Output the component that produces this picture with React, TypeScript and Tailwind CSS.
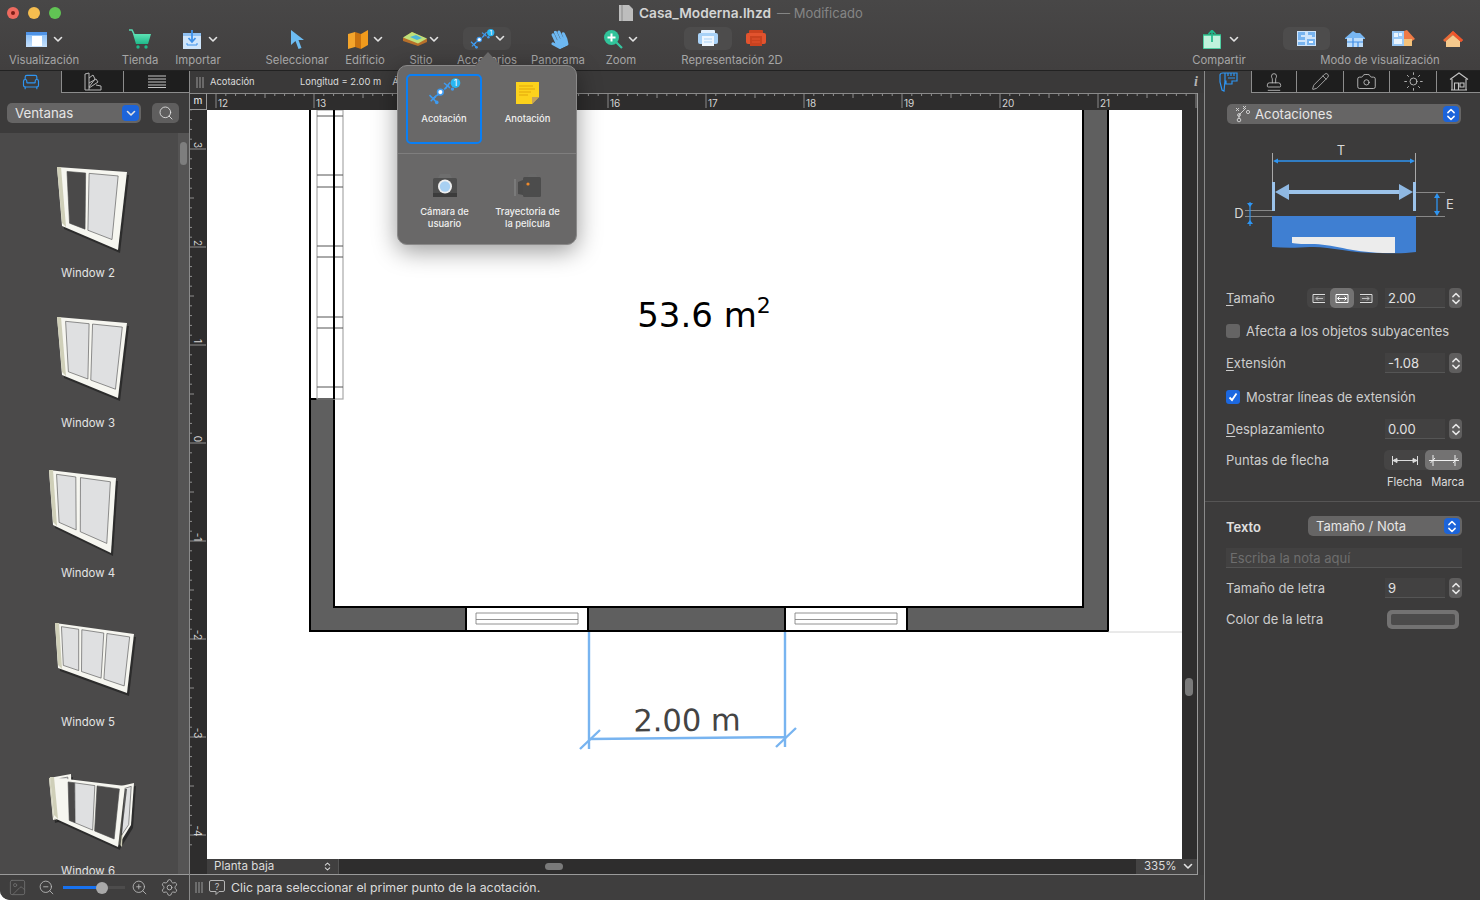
import React from "react";
import { Armchair, Stamp, Pencil, Camera, Sun, Search, ZoomIn, ZoomOut, Settings, Image as ImageIcon } from "lucide-react";
import { FaHandPaper } from "react-icons/fa";

type Pt = [number, number];

function Chev({ className = "" }: { className?: string }) {
  return (
    <svg width="10" height="7" viewBox="0 0 10 7" className={className}>
      <path d="M1.5 1.5 5 5l3.5-3.5" fill="none" stroke="#e2e2e2" strokeWidth="1.6" strokeLinecap="round" strokeLinejoin="round" />
    </svg>
  );
}

function UpDown({ color = "#fff", w = 10, h = 15 }: { color?: string; w?: number; h?: number }) {
  return (
    <svg width={w} height={h} viewBox="0 0 8 12">
      <path d="M1.5 4.5 4 2l2.5 2.5M1.5 7.5 4 10l2.5-2.5" fill="none" stroke={color} strokeWidth="1.2" strokeLinecap="round" strokeLinejoin="round" />
    </svg>
  );
}

function Grip() {
  return (
    <svg width="8" height="11" viewBox="0 0 8 11" className="shrink-0">
      <path d="M1 0v11M4 0v11M7 0v11" stroke="#9a9a9a" strokeWidth="1" />
    </svg>
  );
}

function ViewIcon() {
  return (
    <svg width="21" height="15" viewBox="0 0 21 15">
      <defs>
        <linearGradient id="vw" x1="0" y1="0" x2="0" y2="1">
          <stop offset="0" stopColor="#7fb8f5" />
          <stop offset="1" stopColor="#c6e0fb" />
        </linearGradient>
      </defs>
      <rect width="21" height="15" fill="url(#vw)" />
      <rect x="0" y="0" width="21" height="3" fill="#4f93e6" />
      <rect x="6" y="4" width="10" height="10" fill="#fff" />
    </svg>
  );
}

function CartIcon() {
  return (
    <svg width="24" height="20" viewBox="0 0 24 20">
      <defs>
        <linearGradient id="ct" x1="0" y1="0" x2="0" y2="1">
          <stop offset="0" stopColor="#5de3b5" />
          <stop offset="1" stopColor="#1fb98a" />
        </linearGradient>
      </defs>
      <path d="M1 1h3l2 4" fill="none" stroke="#58d8b0" strokeWidth="1.6" />
      <path d="M5 5h18l-3 10H8z" fill="url(#ct)" />
      <circle cx="10" cy="18" r="1.7" fill="#1fb98a" />
      <circle cx="18" cy="18" r="1.7" fill="#1fb98a" />
    </svg>
  );
}

function ImportIcon() {
  return (
    <svg width="18" height="19" viewBox="0 0 18 19">
      <rect x="0" y="3" width="18" height="16" fill="#cfe5fb" />
      <rect x="0" y="3" width="18" height="3" fill="#8fc0f2" />
      <path d="M9 0v11M5.500 8 9 12l3.500-4" fill="none" stroke="#3f92ea" strokeWidth="1.8" />
      <path d="M4 13v2h10v-2" fill="none" stroke="#3f92ea" strokeWidth="1" />
    </svg>
  );
}

function CursorIcon() {
  return (
    <svg width="15" height="19" viewBox="0 0 15 19">
      <path d="M1 0 14 10H8.500l3 8-3 1-3-8L1 15z" fill="#6dbcf2" />
    </svg>
  );
}

function BuildIcon() {
  return (
    <svg width="20" height="19" viewBox="0 0 20 19">
      <path d="M0 4 7 2v15l-7 2z" fill="#f5a52b" />
      <path d="M7 2l6 2v15l-6-2z" fill="#c9720f" />
      <path d="M13 4l7-4v15l-7 4z" fill="#f09a1c" />
    </svg>
  );
}

function SiteIcon() {
  return (
    <svg width="24" height="14" viewBox="0 0 24 14">
      <path d="M0 6 9 0l15 7v3l-9 4L0 9z" fill="#b8702a" />
      <path d="M0 5.500 9 0l15 6.500-9 5z" fill="#bfe07a" />
      <path d="M7 5l6-2 6 3-5 2z" fill="#4db6d8" />
    </svg>
  );
}

function DimIcon({ w = 26, h = 22 }: { w?: number; h?: number }) {
  return (
    <svg width={w} height={h} viewBox="0 0 28 24">
      <path d="M2 15l6 6M3 20l5-5" stroke="#3f9bf0" strokeWidth="1.2" />
      <path d="M5 18 18 7" stroke="#3f9bf0" strokeWidth="1.4" strokeDasharray="3 1" />
      <circle cx="8" cy="21" r="1.5" fill="#3f9bf0" />
      <circle cx="11" cy="12.500" r="3" fill="#3f9bf0" />
      <circle cx="11" cy="12.500" r="1.7" fill="#fff" />
      <path d="M14 5l5 4M15 9.500l4-5" stroke="#3f9bf0" strokeWidth="1.2" />
      <circle cx="21" cy="10" r="1.4" fill="#3f9bf0" />
      <circle cx="23.500" cy="5" r="4" fill="#29b5f2" />
      <text x="23.500" y="7.500" textAnchor="middle" fontSize="7" fill="#fff">1</text>
    </svg>
  );
}

function ZoomGreen() {
  return (
    <svg width="19" height="19" viewBox="0 0 19 19">
      <path d="m11 11 7 7" stroke="#36c7a0" strokeWidth="2.2" />
      <circle cx="7.500" cy="7.500" r="7.500" fill="#31c39a" />
      <path d="M7.500 3.500v8M3.500 7.500h8" stroke="#fff" strokeWidth="2" />
    </svg>
  );
}

function Render({ a, b, c }: { a: string; b: string; c: string }) {
  return (
    <svg width="20" height="17" viewBox="0 0 20 17">
      <rect x="3" y="0" width="14" height="5" rx="1" fill={b} />
      <rect x="0" y="3" width="20" height="11" rx="2" fill={a} />
      <rect x="4" y="6" width="12" height="10" fill={c} />
      <path d="M6 9h8M6 12h8" stroke={a} strokeWidth="1" />
    </svg>
  );
}

function ShareIcon() {
  return (
    <svg width="18" height="19" viewBox="0 0 18 19">
      <rect x="0" y="5" width="18" height="14" fill="#bff3dc" stroke="#2cc38f" strokeWidth="1.5" />
      <path d="M9 12V1M5.500 4 9 .5 12.500 4" fill="none" stroke="#1fb98a" strokeWidth="1.7" />
    </svg>
  );
}

function PlanMode() {
  return (
    <svg width="19" height="15" viewBox="0 0 19 15">
      <rect width="19" height="15" fill="#cfe4fa" />
      <path d="M1 1h7v3H4v2h4v3H1zM11 1h7v5h-3V4h-4zM1 11h7v3H1zM10 8h8v6h-8z" fill="#78b4ef" />
      <path d="M12 10h4v2h-4z" fill="#f0f7fe" />
    </svg>
  );
}

function HouseMode() {
  return (
    <svg width="20" height="16" viewBox="0 0 20 16">
      <path d="M0 7 8 0l3 2h4l5 5v1H0z" fill="#77b6f2" />
      <rect x="2" y="7" width="16" height="9" fill="#bcdcfa" />
      <path d="M2 11h16M8 7v9M13 11v5" stroke="#3f8ee6" strokeWidth="1.2" />
    </svg>
  );
}

function SplitMode() {
  return (
    <svg width="23" height="17" viewBox="0 0 23 17">
      <rect x="0" y="1" width="12" height="15" fill="#9ac8f5" />
      <path d="M2 3h4v4H2zM7 3h3v3H7zM2 9h8v5H2z" fill="#e9f4fe" />
      <path d="M12 1l3-1 8 9-3 2v5h-8z" fill="#ef7a45" />
      <path d="M12 9h8v7h-8z" fill="#f4c27a" />
    </svg>
  );
}

function RoofMode() {
  return (
    <svg width="20" height="16" viewBox="0 0 20 16">
      <path d="M10 0 20 9l-2 2L10 4 2 11 0 9z" fill="#ea6a37" />
      <path d="M3 10l7-6 7 6v6H3z" fill="#f5c98d" />
      <path d="M10 0 20 9l-2 2L8 2z" fill="#f0552c" />
    </svg>
  );
}

function NoteIcon() {
  return (
    <svg width="23" height="24" viewBox="0 0 23 24">
      <path d="M0 1h23v15l-7 7H0z" fill="#fcd21c" />
      <path d="M23 16h-7v7z" fill="#c4a25a" />
      <path d="M3 5h14M3 8h16M3 11h12M3 14h9" stroke="#e2a50a" strokeWidth="1.2" />
    </svg>
  );
}

function CamIcon() {
  return (
    <svg width="24" height="24" viewBox="0 0 24 24">
      <path d="M7 0h10l2 4H5z" fill="#6e6e6e" />
      <rect y="4" width="24" height="18" rx="1.500" fill="#4e4e4e" />
      <rect y="19" width="24" height="4" fill="#3c3c3c" />
      <circle cx="12" cy="12.500" r="7" fill="#f0f0f0" />
      <circle cx="12" cy="12.500" r="5.200" fill="#a8d0f2" />
    </svg>
  );
}

function MovieIcon() {
  return (
    <svg width="27" height="24" viewBox="0 0 27 24">
      <rect x="0" y="5" width="2" height="17" fill="#7a7a7a" />
      <path d="M4 8l5-2v15l-5-1z" fill="#4a4a4a" />
      <path d="M15 0h7l2 3h-11z" fill="#6a6a6a" />
      <rect x="9" y="3" width="18" height="20" rx="1.500" fill="#4c4c4c" />
      <circle cx="14" cy="10" r="1.600" fill="#f08a2a" />
    </svg>
  );
}

function FanIcon() {
  return (
    <svg width="18" height="19" viewBox="0 0 18 19" fill="none" stroke="#b5b5b5" strokeWidth="1">
      <path d="M1 18V2l4-1v17zM5 6l4-3 2 4-6 8M5 11l7-4 2 3-9 6M5 18h12v-4l-5-1" />
    </svg>
  );
}

function ListIcon() {
  return (
    <svg width="18" height="13" viewBox="0 0 18 13">
      <path d="M0 1h18M0 4h18M0 7h18M0 10h18M0 12.500h18" stroke="#c4c4c4" strokeWidth="1" />
    </svg>
  );
}

function CaliperIcon() {
  return (
    <svg width="20" height="20" viewBox="0 0 20 20" fill="none" stroke="#2e95f2" strokeWidth="1.2">
      <path d="M2 3c0-1 1-2 3-2h14v8h-5v3H8v-3H7l-1 10-2-1-2-8z" />
      <path d="M7 1v8M10 1v3M13 1v3M16 1v3M10 6h7" />
    </svg>
  );
}

function GarageIcon() {
  return (
    <svg width="20" height="19" viewBox="0 0 20 19" fill="none" stroke="#c4c4c4" strokeWidth="1.100">
      <path d="M1 7.500 10 1l9 6.500M3 7v11h14V7M2 18h16" />
      <path d="M5.500 18v-7h4v7M11 11h4v4h-4z" />
    </svg>
  );
}

function HelpBubble() {
  return (
    <svg width="16" height="15" viewBox="0 0 16 15" className="ml-[6px] shrink-0">
      <path d="M2 .5h12A1.500 1.500 0 0 1 15.500 2v8a1.500 1.500 0 0 1-1.500 1.500h-4L7 14.500v-3H2A1.500 1.500 0 0 1 .5 10V2A1.500 1.500 0 0 1 2 .5z" fill="none" stroke="#b5b5b5" strokeWidth="1" />
      <text x="8" y="9.500" textAnchor="middle" fontSize="9" fill="#c4c4c4">?</text>
    </svg>
  );
}

function Tab({ selected, className = "", children }: { selected?: boolean; className?: string; children: React.ReactNode }) {
  return (
    <div
      className={
        "flex h-[22px] items-center justify-center " +
        (selected ? "bg-[#3c3b3b] " : "border-b border-r border-b-[#8c8c8c] border-r-[#8c8c8c] bg-[#1e1e1e] ") +
        className
      }
    >
      {children}
    </div>
  );
}

function ToolLabel({ children, className = "" }: { children: React.ReactNode; className?: string }) {
  return <div className={"mt-[3px] h-[14px] whitespace-nowrap text-center text-[11.3px] leading-[14px] text-[#a6a6a6] " + className}>{children}</div>;
}

function lerp(q: Pt[], u: number, v: number): Pt {
  const [tl, tr, br, bl] = q;
  const x = (1 - v) * ((1 - u) * tl[0] + u * tr[0]) + v * ((1 - u) * bl[0] + u * br[0]);
  const y = (1 - v) * ((1 - u) * tl[1] + u * tr[1]) + v * ((1 - u) * bl[1] + u * br[1]);
  return [x, y];
}

function quadPts(q: Pt[], u0: number, u1: number, v0: number, v1: number) {
  return [lerp(q, u0, v0), lerp(q, u1, v0), lerp(q, u1, v1), lerp(q, u0, v1)].map((p) => p.join(",")).join(" ");
}

type Pane = [number, number, boolean];

function WindowQuad({ q, panes, v0 = 0.06, v1 = 0.9 }: { q: Pt[]; panes: Pane[]; v0?: number; v1?: number }) {
  const side: Pt[] = [q[0], [q[0][0] + 4, q[0][1]], [q[3][0] + 4, q[3][1] + 1], [q[3][0], q[3][1] - 3]];
  return (
    <g>
      <polygon points={q.map((p) => `${p[0] + 2},${p[1] + 3}`).join(" ")} fill="#1f1f1f" opacity="0.7" />
      <polygon points={q.map((p) => p.join(",")).join(" ")} fill="#f6f6f0" />
      <polygon points={side.map((p) => p.join(",")).join(" ")} fill="#cfcfb8" />
      {panes.map((p, i) => (
        <polygon
          key={i}
          points={quadPts(q, p[0], p[1], v0, v1)}
          fill={p[2] ? "#dfe0e1" : "#4a4949"}
          stroke="#4a4a4a"
          strokeWidth="0.6"
        />
      ))}
    </g>
  );
}

function WindowItem({ name, y0, className = "", children }: { name: string; y0: number; className?: string; children: React.ReactNode }) {
  return (
    <div className={"h-[150px] shrink-0 " + className}>
      <svg width="178" height="108" viewBox={`0 ${y0} 178 108`} className="block">
        {children}
      </svg>
      <div className="mt-[2px] h-[16px] pr-[2px] text-center text-[11.4px] leading-[16px] text-[#e4e4e4]">{name}</div>
    </div>
  );
}

function Stepper() {
  return (
    <div className="flex h-[20px] w-[13px] items-center justify-center rounded-[4px] bg-[#5f5e5e]">
      <UpDown color="#e6e6e6" />
    </div>
  );
}

function Field({ value, className = "" }: { value: string; className?: string }) {
  return (
    <div className={"flex items-center gap-[4px] " + className}>
      <div className="h-[20px] w-[60px] border-b border-b-[#555] bg-[#424141] pl-[3px] text-[13px] leading-[21px] text-[#e2e2e2]">{value}</div>
      <Stepper />
    </div>
  );
}

function Label({ first, rest }: { first?: string; rest: string }) {
  return (
    <span className="text-[13px] leading-[20px] text-[#cdcdcd]">
      {first ? <u className="underline-offset-2">{first}</u> : null}
      {rest}
    </span>
  );
}

function AlignGlyph({ kind }: { kind: number }) {
  return (
    <svg width="14" height="11" viewBox="0 0 14 11">
      {kind === 0 && (
        <g stroke="#dcdcdc" strokeWidth="1" fill="none">
          <path d="M13 1.500H1v8h12" />
          <path d="M4 5.500h7M4 5.500l2-2M4 5.500l2 2" />
          <path d="M1 3h12v5H1z" fill="#8a8a8a" stroke="none" opacity="0.35" />
        </g>
      )}
      {kind === 1 && (
        <g stroke="#fff" strokeWidth="1" fill="none">
          <path d="M1 1.500h12v8H1z" />
          <path d="M2.500 5.500h9M2.500 5.500l2-2M2.500 5.500l2 2M11.500 5.500l-2-2M11.500 5.500l-2 2" />
        </g>
      )}
      {kind === 2 && (
        <g stroke="#dcdcdc" strokeWidth="1" fill="none">
          <path d="M1 1.500h12v8H1" />
          <path d="M3 5.500h7M10 5.500l-2-2M10 5.500l-2 2" />
          <path d="M1 3h12v5H1z" fill="#8a8a8a" stroke="none" opacity="0.35" />
        </g>
      )}
    </svg>
  );
}

function Ruler() {
  const ticks: React.ReactNode[] = [];
  for (let i = -1; i < 110; i++) {
    const x = 216 + i * 9.8;
    const major = (i + 100) % 10 === 0;
    const mid = (i + 100) % 5 === 0;
    ticks.push(<line key={i} x1={x} x2={x} y1={94} y2={major ? 108 : mid ? 98 : 96} stroke={major ? "#8a8a8a" : "#8f8f8f"} strokeWidth="1" />);
  }
  const nums = [12, 13, 14, 15, 16, 17, 18, 19, 20, 21];
  return (
    <svg width="990" height="17" viewBox="207 93 990 17" className="block">
      <line x1="207" x2="1197" y1="93.5" y2="93.5" stroke="#8a8a8a" />
      {ticks}
      {nums.map((n, i) => (
        <text key={n} x={218 + i * 98} y={107} fontSize="10" fill="#d4d4d4">{n}</text>
      ))}
    </svg>
  );
}

function VRuler() {
  const ticks: React.ReactNode[] = [];
  for (let i = -5; i < 72; i++) {
    const y = 149 + i * 9.8;
    const major = (i + 100) % 10 === 0;
    ticks.push(<line key={i} x1={190} x2={major ? 206 : (i + 100) % 5 === 0 ? 194 : 192} y1={y} y2={y} stroke="#8f8f8f" strokeWidth="1" />);
  }
  const nums = [3, 2, 1, 0, -1, -2, -3, -4];
  return (
    <svg width="17" height="749" viewBox="190 110 17 749" className="block shrink-0">
      {ticks}
      {nums.map((n, i) => {
        const cy = 145 + i * 98;
        return (
          <text key={n} x="198" y={cy} fontSize="10" fill="#d4d4d4" textAnchor="middle" dominantBaseline="central" transform={`rotate(90 198 ${cy})`}>
            {n}
          </text>
        );
      })}
    </svg>
  );
}

function Plan() {
  const hLines = [116, 175, 187, 246, 257, 317, 328, 387];
  const winFrame = (x: number) => (
    <g>
      <rect x={x} y="607" width="122" height="24" fill="#fff" stroke="#000" strokeWidth="2" />
      <path d={`M${x + 10} 613v11M${x + 112} 613v11M${x + 10} 613h102M${x + 10} 619.5h102M${x + 10} 624h102`} stroke="#777" strokeWidth="0.8" fill="none" />
    </g>
  );
  return (
    <svg width="975" height="749" viewBox="207 110 975 749" className="block shrink-0 bg-white">
      <path d="M310 399h24v208h749V110h25v521H310z" fill="#5f5f5f" />
      <path d="M310 110v521h798V110M334 110v497h749V110" fill="none" stroke="#000" strokeWidth="2" />
      <path d="M310 399h24" stroke="#000" strokeWidth="2" />
      <rect x="317" y="110" width="26" height="289" fill="none" stroke="#a9a9a9" strokeWidth="1.2" />
      {hLines.map((y) => (
        <line key={y} x1="317" x2="343" y1={y} y2={y} stroke="#555" strokeWidth="1" />
      ))}
      <path d="M334 110v289" stroke="#000" strokeWidth="2" />
      {winFrame(466)}
      {winFrame(785)}
      <line x1="1108" x2="1182" y1="632" y2="632" stroke="#d4d4d4" strokeWidth="1" />
      <g stroke="#78b4f0" strokeWidth="2.4" fill="none">
        <path d="M589 632v117M785 632v115M589 739 785 737" />
        <path d="M580 749 600 730M776 747 796 728" />
      </g>
      <text x="704" y="327" textAnchor="middle" fontSize="34" fill="#000" fontFamily="'DejaVu Sans',sans-serif">
        53.6 m<tspan fontSize="22" dy="-14">2</tspan>
      </text>
      <text x="687" y="731" textAnchor="middle" fontSize="30.500" fill="#444" fontFamily="'DejaVu Sans',sans-serif" transform="rotate(-0.5 687 720)">
        2.00 m
      </text>
    </svg>
  );
}

function Diagram() {
  return (
    <svg width="275" height="130" viewBox="1205 135 275 130" className="block">
      <text x="1341" y="155" fontSize="13" fill="#d8d8d8" textAnchor="middle">T</text>
      <path d="M1272.500 153v57M1415.500 153v57" stroke="#a8a8a8" strokeWidth="1" />
      <path d="M1275 161h138" stroke="#2e95f2" strokeWidth="1.3" />
      <path d="M1273 161l5-2.500v5zM1415 161l-5-2.500v5z" fill="#2e95f2" />
      <rect x="1272" y="182" width="3" height="29" fill="#9cc3ea" />
      <rect x="1413" y="182" width="3" height="29" fill="#9cc3ea" />
      <path d="M1289 190h110v4h-110z" fill="#9cc3ea" />
      <path d="M1275 192l14-8v16zM1413 192l-14-8v16z" fill="#8fb8e2" />
      <path d="M1245 210.500h27M1245 216.500h200M1416 192.500h29" stroke="#888" strokeWidth="1" />
      <path d="M1437 196v18" stroke="#2e95f2" strokeWidth="1.3" />
      <path d="M1437 193l-3 5h6zM1437 216l-3-5h6z" fill="#2e95f2" />
      <text x="1450" y="209" fontSize="13" fill="#d8d8d8" textAnchor="middle">E</text>
      <path d="M1250 202v24" stroke="#2e95f2" strokeWidth="1.2" />
      <path d="M1250 207l-3-4h6zM1250 220l-3 4h6z" fill="#2e95f2" />
      <text x="1239" y="218" fontSize="13" fill="#d8d8d8" textAnchor="middle">D</text>
      <path d="M1272 216h144v36c-14 2-26 1-38 1-28 0-50-7-68-6-14 1-26 1-38 0z" fill="#3f7fd2" />
      <path d="M1292 237h103v16c-38 1-58-8-80-9-10 0-19 0-23-1z" fill="#ececec" />
    </svg>
  );
}

export default function App() {
  return (
    <div className="relative flex h-[900px] w-[1480px] flex-col overflow-hidden rounded-bl-[10px] bg-[#3c3b3b] font-['Inter','Liberation_Sans',sans-serif]">
      <header className="h-[71px] shrink-0 border-b border-b-[#222] bg-gradient-to-b from-[#484747] to-[#413f3f]">
        <div className="relative flex h-[25px] items-center">
          <div className="ml-[7px] flex items-center gap-[9px]">
            <div className="flex h-[12px] w-[12px] items-center justify-center rounded-full bg-[#ee6a5f]">
              <div className="h-[4px] w-[4px] rounded-full bg-[#7c1d17]" />
            </div>
            <div className="h-[12px] w-[12px] rounded-full bg-[#f5bd4f]" />
            <div className="h-[12px] w-[12px] rounded-full bg-[#61c454]" />
          </div>
          <div className="ml-[558px] flex items-center">
            <svg width="14" height="16" viewBox="0 0 14 16" className="mr-[6px]">
              <path d="M0 0h10l4 4v12H0z" fill="#bdbdbd" />
              <path d="M3 0v16" stroke="#8a8a8a" strokeWidth="1" />
            </svg>
            <span className="text-[13.7px] font-semibold leading-[18px] text-[#d4d4d4]">Casa_Moderna.lhzd</span>
            <span className="ml-[6px] text-[13px] leading-[18px] text-[#858585]">— Modificado</span>
          </div>
        </div>
        <div className="mt-[3px] flex h-[42px]">
          <div className="ml-[4px] w-[80px]">
            <div className="flex h-[22px] items-center justify-center gap-[6px]"><ViewIcon /><Chev /></div>
            <ToolLabel>Visualización</ToolLabel>
          </div>
          <div className="ml-[36px] w-[40px]">
            <div className="flex h-[22px] items-center justify-center"><CartIcon /></div>
            <ToolLabel>Tienda</ToolLabel>
          </div>
          <div className="ml-[8px] w-[60px]">
            <div className="flex h-[22px] items-center justify-center gap-[7px] pl-[4px]"><ImportIcon /><Chev /></div>
            <ToolLabel>Importar</ToolLabel>
          </div>
          <div className="ml-[34px] w-[70px]">
            <div className="flex h-[22px] items-center justify-center"><CursorIcon /></div>
            <ToolLabel>Seleccionar</ToolLabel>
          </div>
          <div className="ml-[8px] w-[50px]">
            <div className="flex h-[22px] items-center justify-center gap-[5px]"><BuildIcon /><Chev /></div>
            <ToolLabel>Edificio</ToolLabel>
          </div>
          <div className="ml-[6px] w-[50px]">
            <div className="flex h-[22px] items-center justify-center gap-[2px]"><SiteIcon /><Chev /></div>
            <ToolLabel>Sitio</ToolLabel>
          </div>
          <div className="ml-[11px] w-[60px]">
            <div className="mx-auto -mt-px flex h-[23px] w-[48px] items-center justify-center rounded-[6px] bg-[#4b4a4a]"><DimIcon /><Chev /></div>
            <ToolLabel>Accesorios</ToolLabel>
          </div>
          <div className="ml-[11px] w-[60px]">
            <div className="flex h-[22px] items-center justify-center"><FaHandPaper size={19} color="#6db8f2" className="-rotate-[25deg]" /></div>
            <ToolLabel>Panorama</ToolLabel>
          </div>
          <div className="ml-[8px] w-[50px]">
            <div className="flex h-[22px] items-center justify-center gap-[5px]"><ZoomGreen /><Chev /></div>
            <ToolLabel>Zoom</ToolLabel>
          </div>
          <div className="ml-[31px] w-[110px]">
            <div className="-mt-px flex h-[23px] items-center pl-[7px]">
              <div className="flex h-[23px] w-[48px] items-center justify-center rounded-[6px] bg-[#4d4c4c]"><Render a="#a9d2f7" b="#e3f0fd" c="#eef6fe" /></div>
              <div className="ml-[14px]"><Render a="#e2532e" b="#c9421f" c="#c9421f" /></div>
            </div>
            <ToolLabel>Representación 2D</ToolLabel>
          </div>
          <div className="ml-[402px] w-[60px]">
            <div className="flex h-[22px] items-center justify-center gap-[8px] pl-[4px]"><ShareIcon /><Chev /></div>
            <ToolLabel>Compartir</ToolLabel>
          </div>
          <div className="ml-[21px] w-[210px]">
            <div className="-mt-px flex h-[23px] items-center pl-[13px]">
              <div className="flex h-[23px] w-[47px] items-center justify-center rounded-[6px] bg-[#4d4c4c]"><PlanMode /></div>
              <div className="ml-[15px]"><HouseMode /></div>
              <div className="ml-[27px]"><SplitMode /></div>
              <div className="ml-[28px]"><RoofMode /></div>
            </div>
            <ToolLabel className="pl-[10px]">Modo de visualización</ToolLabel>
          </div>
        </div>
      </header>

      <div className="flex min-h-0 flex-1">
        <aside className="flex w-[190px] shrink-0 flex-col border-r border-r-[#8a8a8a]">
          <div className="flex h-[23px] shrink-0">
            <Tab selected className="w-[61px]"><Armchair size={20} color="#2e95f2" strokeWidth={1.4} /></Tab>
            <Tab className="w-[63px] border-l border-l-[#8c8c8c]"><FanIcon /></Tab>
            <Tab className="w-[65px] !border-r-0"><ListIcon /></Tab>
          </div>
          <div className="flex h-[39px] shrink-0 items-start pl-[7px] pt-[9px]">
            <div className="flex h-[20px] w-[134px] items-center justify-between rounded-[5px] bg-[#666565] pl-[8px] pr-[2px]">
              <span className="text-[13.3px] leading-[20px] text-[#e6e6e6]">Ventanas</span>
              <div className="flex h-[16px] w-[17px] items-center justify-center rounded-[4px] bg-[#1c64da]"><Chev /></div>
            </div>
            <div className="ml-[11px] flex h-[20px] w-[27px] items-center justify-center rounded-[5px] bg-[#5f5e5e]">
              <Search size={16} color="#e4e4e4" strokeWidth={1.3} />
            </div>
          </div>
          <div className="flex min-h-0 flex-1">
            <div className="flex w-[178px] flex-col overflow-hidden bg-[#4b4a4a] pt-[22px]">
              <WindowItem name="Window 2" y0={155}>
                <WindowQuad q={[[57, 167], [127, 172], [118, 250], [62, 226]]} panes={[[0.14, 0.41, false], [0.46, 0.88, true]]} />
              </WindowItem>
              <WindowItem name="Window 3" y0={305}>
                <WindowQuad q={[[57, 317], [127, 323], [118, 398], [62, 375]]} panes={[[0.12, 0.46, true], [0.51, 0.94, true]]} />
              </WindowItem>
              <WindowItem name="Window 4" y0={455}>
                <WindowQuad q={[[49, 470], [116, 478], [111, 553], [53, 525]]} panes={[[0.11, 0.4, true], [0.47, 0.92, true]]} />
              </WindowItem>
              <WindowItem name="Window 5" y0={604} className="-mt-px">
                <WindowQuad q={[[55, 623], [134, 634], [127, 693], [58, 668]]} panes={[[0.08, 0.3, true], [0.34, 0.62, true], [0.66, 0.95, true]]} />
              </WindowItem>
              <WindowItem name="Window 6" y0={753} className="-mt-px">
                <WindowQuad q={[[121, 786], [134, 783], [131, 825], [118, 846]]} panes={[[0.25, 0.8, true]]} />
                <WindowQuad q={[[49, 778], [71, 774], [72, 815], [53, 820]]} panes={[[0.2, 0.85, true]]} />
                <WindowQuad q={[[50, 777], [125, 786], [118, 847], [54, 818]]} panes={[[0.24, 0.33, false], [0.33, 0.6, true], [0.63, 0.93, false]]} />
              </WindowItem>
            </div>
            <div className="w-[11px] bg-[#555454] pl-[2px] pt-[9px]">
              <div className="h-[23px] w-[7px] rounded-[4px] bg-[#7e7e7e]" />
            </div>
          </div>
          <div className="flex h-[26px] shrink-0 items-center border-t border-t-[#9a9a9a] bg-[#3f3e3e] pl-[8px]">
            <ImageIcon size={19} color="#6f6f6f" strokeWidth={1.1} />
            <ZoomOut size={17} color="#bdbdbd" strokeWidth={1.2} className="ml-[11px]" />
            <div className="relative ml-[8px] flex h-[12px] w-[62px] items-center">
              <div className="h-[3px] w-[39px] bg-[#1872f0]" />
              <div className="h-[3px] w-[23px] bg-[#4d4c4c]" />
              <div className="absolute left-[33px] h-[12px] w-[12px] rounded-full bg-[#a9a9a9]" />
            </div>
            <ZoomIn size={17} color="#bdbdbd" strokeWidth={1.2} className="ml-[6px]" />
            <Settings size={19} color="#bdbdbd" strokeWidth={1.1} className="ml-[12px]" />
          </div>
        </aside>

        <main className="flex w-[1015px] shrink-0 flex-col border-r border-r-[#8a8a8a]">
          <div className="flex h-[22px] shrink-0 items-center bg-[#3a3939] pl-[6px] pr-[6px] text-[9.4px] text-[#dcdcdc]">
            <Grip />
            <span className="ml-[6px] w-[90px]">Acotación</span>
            <span>Longitud = 2.00 m</span>
            <span className="ml-[11px]">Ángulo</span>
            <span className="ml-auto font-['Liberation_Serif',serif] text-[14px] font-bold italic leading-[22px] text-[#b5b5b5]">i</span>
          </div>
          <div className="flex min-h-0 flex-1 flex-col pr-[6px]">
            <div className="flex min-h-0 flex-1 flex-col border-b border-r border-b-[#9a9a9a] border-r-[#9a9a9a]">
              <div className="flex h-[17px] shrink-0 bg-[#2e2d2d]">
                <div className="h-[17px] w-[17px] border-b border-r border-t border-b-[#9a9a9a] border-r-[#9a9a9a] border-t-[#8a8a8a] text-center text-[10px] font-medium leading-[13px] text-[#dcdcdc]">m</div>
                <Ruler />
              </div>
              <div className="flex h-[749px] shrink-0 bg-[#2e2d2d]">
                <VRuler />
                <Plan />
                <div className="w-[15px] pl-[3px] pt-[568px]">
                  <div className="h-[18px] w-[8px] rounded-[4px] bg-[#7a7a7a]" />
                </div>
              </div>
              <div className="flex h-[15px] shrink-0 bg-[#2e2d2d] pl-[17px]">
                <div className="flex h-[15px] w-[132px] items-center justify-between border-r border-r-[#555] bg-[#403f3f] pl-[7px] pr-[7px]">
                  <span className="text-[11.6px] leading-[15px] text-[#dcdcdc]">Planta baja</span>
                  <UpDown color="#d8d8d8" w={7} h={11} />
                </div>
                <div className="ml-[206px] mt-[4px] h-[7px] w-[18px] rounded-[4px] bg-[#7a7a7a]" />
                <div className="ml-auto flex h-[15px] w-[61px] items-center justify-between bg-[#444343] pl-[8px] pr-[4px]">
                  <span className="text-[11.5px] leading-[15px] text-[#dcdcdc]">335%</span>
                  <Chev />
                </div>
              </div>
            </div>
          </div>
          <div className="flex h-[25px] shrink-0 items-center bg-[#3f3e3e] pl-[5px]">
            <Grip />
            <HelpBubble />
            <span className="ml-[6px] text-[12.3px] leading-[18px] text-[#dcdcdc]">Clic para seleccionar el primer punto de la acotación.</span>
          </div>
        </main>

        <aside className="flex w-[275px] shrink-0 flex-col">
          <div className="flex h-[23px] shrink-0">
            <Tab selected className="w-[46px]"><CaliperIcon /></Tab>
            <Tab className="w-[46px] border-l border-l-[#8c8c8c]"><Stamp size={20} color="#c4c4c4" strokeWidth={1} /></Tab>
            <Tab className="w-[47px]"><Pencil size={19} color="#c4c4c4" strokeWidth={1} /></Tab>
            <Tab className="w-[46px]"><Camera size={21} color="#c4c4c4" strokeWidth={1} /></Tab>
            <Tab className="w-[47px]"><Sun size={21} color="#c4c4c4" strokeWidth={1} /></Tab>
            <Tab className="w-[43px] !border-r-0"><GarageIcon /></Tab>
          </div>
          <div className="ml-[22px] mt-[10px] flex h-[20px] w-[234px] shrink-0 items-center rounded-[5px] bg-[#666565] pl-[8px] pr-[2px]">
            <svg width="16" height="18" viewBox="0 0 16 18" fill="none" stroke="#d8d8d8" strokeWidth="0.9">
              <path d="M1 3l3 3M4 3 1 6M4 10l6-6M8 1l3 3M11 1 8 4M4 10v4" />
              <circle cx="4" cy="15" r="1.800" />
              <circle cx="13" cy="7" r="1.600" />
              <circle cx="4" cy="10" r="1.400" />
            </svg>
            <span className="ml-[4px] text-[13.2px] leading-[20px] text-[#e6e6e6]">Acotaciones</span>
            <div className="ml-auto flex h-[16px] w-[16px] items-center justify-center rounded-[4px] bg-[#1c64da]"><UpDown /></div>
          </div>
          <div className="mt-[11px] shrink-0"><Diagram /></div>
          <div className="mt-[23px] flex h-[20px] shrink-0 items-center pl-[21px] pr-[18px]">
            <Label first="T" rest="amaño" />
            <div className="ml-auto mr-[7px] flex h-[20px] w-[71px] items-center rounded-[5px] bg-[#454444]">
              <div className="flex h-[20px] w-[23px] items-center justify-center"><AlignGlyph kind={0} /></div>
              <div className="flex h-[20px] w-[24px] items-center justify-center rounded-[5px] bg-[#737272]"><AlignGlyph kind={1} /></div>
              <div className="flex h-[20px] w-[24px] items-center justify-center"><AlignGlyph kind={2} /></div>
            </div>
            <Field value="2.00" />
          </div>
          <div className="mt-[13px] flex h-[20px] shrink-0 items-center pl-[21px]">
            <div className="h-[14px] w-[14px] rounded-[3px] bg-[#656464]" />
            <span className="ml-[6px] text-[13px] leading-[20px] text-[#cdcdcd]">Afecta a los objetos subyacentes</span>
          </div>
          <div className="mt-[12px] flex h-[20px] shrink-0 items-center pl-[21px] pr-[18px]">
            <Label first="E" rest="xtensión" />
            <Field value="-1.08" className="ml-auto" />
          </div>
          <div className="mt-[14px] flex h-[20px] shrink-0 items-center pl-[21px]">
            <div className="flex h-[14px] w-[14px] items-center justify-center rounded-[3px] bg-[#1c68e0]">
              <svg width="10" height="10" viewBox="0 0 10 10"><path d="M1.500 5.500 4 8l4.500-6.500" fill="none" stroke="#fff" strokeWidth="1.8" /></svg>
            </div>
            <span className="ml-[6px] text-[13px] leading-[20px] text-[#cdcdcd]">Mostrar líneas de extensión</span>
          </div>
          <div className="mt-[12px] flex h-[20px] shrink-0 items-center pl-[21px] pr-[18px]">
            <Label first="D" rest="esplazamiento" />
            <Field value="0.00" className="ml-auto" />
          </div>
          <div className="mt-[11px] flex h-[20px] shrink-0 items-center pl-[21px] pr-[18px]">
            <Label rest="Puntas de flecha" />
            <div className="ml-auto flex h-[20px] w-[78px] rounded-[5px] bg-[#454444]">
              <div className="flex h-[20px] w-[41px] items-center justify-center">
                <svg width="26" height="9" viewBox="0 0 26 9"><path d="M.5 0v9M25.500 0v9M1 4.500h24M1 4.500l4-2v4zM25 4.500l-4-2v4z" stroke="#dcdcdc" strokeWidth="1" fill="#dcdcdc" /></svg>
              </div>
              <div className="flex h-[20px] w-[37px] items-center justify-center rounded-[5px] bg-[#737272]">
                <svg width="30" height="11" viewBox="0 0 30 11"><path d="M4 0v11M26 0v11M0 5.500h30M1.500 8 6 3M24 8l4.500-5" stroke="#f0f0f0" strokeWidth="1" fill="none" /></svg>
              </div>
            </div>
          </div>
          <div className="mt-[5px] flex h-[14px] shrink-0 pl-[182px] text-[11.2px] leading-[14px] text-[#dcdcdc]">
            <span>Flecha</span>
            <span className="ml-[9px]">Marca</span>
          </div>
          <div className="mt-[12px] h-px shrink-0 bg-[#565555]" />
          <div className="mt-[15px] flex h-[20px] shrink-0 items-center pl-[21px] pr-[18px]">
            <span className="text-[13px] font-semibold leading-[20px] text-[#e0e0e0]">Texto</span>
            <div className="ml-auto -mt-[2px] flex h-[20px] w-[154px] items-center rounded-[5px] bg-[#666565] pl-[8px] pr-[2px]">
              <span className="-mt-[1px] text-[13px] leading-[18px] text-[#e6e6e6]">Tamaño / Nota</span>
              <div className="ml-auto flex h-[16px] w-[16px] items-center justify-center rounded-[4px] bg-[#1c64da]"><UpDown /></div>
            </div>
          </div>
          <div className="ml-[21px] mt-[11px] h-[20px] w-[236px] shrink-0 border-b border-b-[#555] bg-[#424141] pl-[4px] text-[13px] leading-[20px] text-[#6e6e6e]">Escriba la nota aquí</div>
          <div className="mt-[10px] flex h-[20px] shrink-0 items-center pl-[21px] pr-[18px]">
            <Label rest="Tamaño de letra" />
            <Field value="9" className="ml-auto" />
          </div>
          <div className="mt-[11px] flex h-[20px] shrink-0 items-center pl-[21px] pr-[21px]">
            <Label rest="Color de la letra" />
            <div className="ml-auto flex h-[19px] w-[72px] items-center justify-center rounded-[5px] bg-[#737272]">
              <div className="h-[11px] w-[64px] rounded-[2px] bg-[#4c4b4b]" />
            </div>
          </div>
        </aside>
      </div>

      <div className="absolute left-[397px] top-[65px] z-10 h-[180px] w-[180px] rounded-[10px] border border-[#8a8989] bg-[#696868] shadow-[0_6px_24px_rgba(0,0,0,0.4)]">
        <svg width="26" height="14" viewBox="0 0 26 14" className="absolute -top-[14px] left-[77px]">
          <path d="M0 14 13 0l13 14z" fill="#696868" />
        </svg>
        <div className="grid h-[88px] grid-cols-2 border-b border-b-[#7f7e7e]">
          <div className="ml-[8px] mt-[8px] flex h-[70px] w-[76px] flex-col items-center rounded-[5px] border-2 border-[#0a7ff5]">
            <div className="mt-[1px]"><DimIcon w={34} h={29} /></div>
            <span className="mt-[7px] text-[9.4px] font-medium leading-[12px] text-[#f0f0f0]">Acotación</span>
          </div>
          <div className="flex flex-col items-center pr-[8px] pt-[15px]">
            <NoteIcon />
            <span className="mt-[8px] text-[9.4px] font-medium leading-[12px] text-[#f0f0f0]">Anotación</span>
          </div>
        </div>
        <div className="grid grid-cols-2">
          <div className="flex flex-col items-center pl-[4px] pt-[20px]">
            <CamIcon />
            <span className="mt-[8px] text-center text-[9.4px] font-medium leading-[12px] text-[#f0f0f0]">Cámara de<br />usuario</span>
          </div>
          <div className="flex flex-col items-center pr-[8px] pt-[20px]">
            <MovieIcon />
            <span className="mt-[8px] text-center text-[9.4px] font-medium leading-[12px] text-[#f0f0f0]">Trayectoria de<br />la película</span>
          </div>
        </div>
      </div>
    </div>
  );
}
